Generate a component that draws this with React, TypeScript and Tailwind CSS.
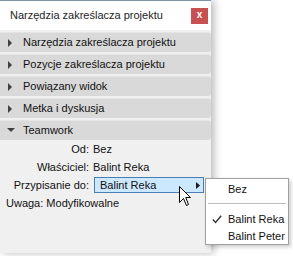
// Teamwork palette - Narzędzia zakreślacza projektu

const font = { fontFamily: "'Segoe UI', 'Liberation Sans', Arial, sans-serif" };

const sections = [
    "Narzędzia zakreślacza projektu",
    "Pozycje zakreślacza projektu",
    "Powiązany widok",
    "Metka i dyskusja",
];

function SectionHeader({ title, open }: { title: string; open?: boolean }) {
    return (
        <div className="flex items-center h-[20px] bg-[#d9d9d9] rounded-r-[3px] border-t border-[#e4e4e4]">
            <div className="w-[23px] flex justify-center pr-[2px]">
                {open ? (
                    <svg width="8" height="5" viewBox="0 0 8 5">
                        <path d="M0 0 L8 0 L4 4 Z" fill="#404040" />
                    </svg>
                ) : (
                    <svg width="5" height="8" viewBox="0 0 5 8">
                        <path d="M0 0 L4 4 L0 8 Z" fill="#404040" />
                    </svg>
                )}
            </div>
            <span className="text-[11px] text-[#111] leading-none whitespace-nowrap">{title}</span>
        </div>
    );
}

function Cursor() {
    return (
        <svg width="13" height="21" viewBox="0 0 13 21" className="absolute left-[179px] top-[186px]">
            <path
                d="M0.5 0.5 L0.5 16.5 L4.5 12.5 L7.5 19.5 L9.5 18.5 L6.7 11.5 L11.5 11.5 Z"
                fill="#ffffff"
                stroke="#000000"
                strokeWidth="1"
            />
        </svg>
    );
}

export default function App() {
    return (
        <div className="relative w-[293px] h-[256px] bg-white overflow-hidden" style={font}>
            {/* Window */}
            <div className="w-[211px] h-[253px] flex flex-col bg-[#f0f0f0] border-t border-[#7a93ab] shadow-[3px_0_8px_rgba(0,0,0,0.28)]">
                {/* Title bar */}
                <div className="h-[29px] bg-white flex items-center justify-between pl-[10px] pr-[3px]">
                    <span className="text-[11px] text-[#1e1e1e] whitespace-nowrap">Narzędzia zakreślacza projektu</span>
                    <div className="w-[17px] h-[16px] bg-[#c75050] flex items-center justify-center">
                        <span className="text-white text-[10px] font-bold leading-none pb-[1px]">x</span>
                    </div>
                </div>

                {/* Sections */}
                <div className="flex flex-col gap-[2px] pt-[2px]">
                    {sections.map((s) => (
                        <SectionHeader key={s} title={s} />
                    ))}
                    <SectionHeader title="Teamwork" open />
                </div>

                {/* Teamwork content */}
                <div className="grid grid-cols-[89px_1fr] gap-x-[4px] text-[11px] text-[#111] leading-[18px] whitespace-nowrap">
                    <span className="text-right">Od:</span>
                    <span>Bez</span>
                    <span className="text-right">Właściciel:</span>
                    <span>Balint Reka</span>
                    <span className="text-right">Przypisanie do:</span>
                    <div className="flex items-center h-[18px]">
                        <div className="ml-[1px] w-[110px] h-[16px] flex items-center justify-between bg-[#cce8ff] border border-[#4a7db0] pl-[5px] pr-[3px]">
                            <span className="leading-none">Balint Reka</span>
                            <svg width="4" height="7" viewBox="0 0 4 7">
                                <path d="M0 0 L4 3.5 L0 7 Z" fill="#1a1a1a" />
                            </svg>
                        </div>
                    </div>
                    <span className="col-span-2 pl-[6px]">Uwaga: Modyfikowalne</span>
                </div>
            </div>

            {/* Submenu */}
            <div className="absolute left-[205px] top-[178px] w-[84px] h-[67px] bg-white border border-[#a0a0a0] shadow-[2px_2px_4px_rgba(0,0,0,0.2)] text-[11px] text-[#111] py-[1px] whitespace-nowrap">
                <div className="h-[18px] flex items-center pl-[22px]">Bez</div>
                <div className="h-px bg-[#bdbdbd] mx-[2px] my-[5px]" />
                <div className="h-[17px] flex items-center mt-[7px]">
                    <span className="w-[22px] flex justify-center">
                        <svg width="10" height="9" viewBox="0 0 10 9">
                            <path d="M0.8 4.5 L3.6 7.5 L9.2 0.8" fill="none" stroke="#333" strokeWidth="1.4" />
                        </svg>
                    </span>
                    <span>Balint Reka</span>
                </div>
                <div className="h-[17px] flex items-center pl-[22px]">Balint Peter</div>
            </div>

            <Cursor />
        </div>
    );
}
